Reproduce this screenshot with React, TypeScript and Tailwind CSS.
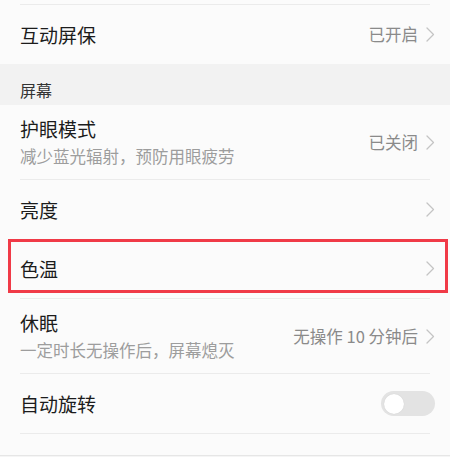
import type { ReactNode } from 'react'

const font = { fontFamily: '"Noto Sans CJK SC", "Noto Sans", sans-serif' }

function Chevron() {
  return (
    <svg width="9" height="15" viewBox="0 0 9 15" fill="none" className="ml-2 shrink-0">
      <path d="M1 1l6.5 6.5L1 14" stroke="#c4c4c4" strokeWidth="1.3" strokeLinecap="round" strokeLinejoin="round" />
    </svg>
  )
}

function Divider() {
  return <div className="mx-5 h-px bg-[#ebebeb]" />
}

interface RowProps {
  title: string
  subtitle?: string
  value?: string
  right?: ReactNode
  highlight?: boolean
}

function Row({ title, subtitle, value, right, highlight }: RowProps) {
  return (
    <div
      className={`relative flex items-center justify-between pl-5 pr-[15px] ${
        subtitle ? 'h-[74px]' : 'h-[59px]'
      }`}
    >
      <div className="flex flex-col">
        <span className="text-[19px] leading-[26px] text-[#1c1c1c]">{title}</span>
        {subtitle && (
          <span className="text-[16.5px] leading-[24px] text-[#9d9d9d] mt-[2px]">{subtitle}</span>
        )}
      </div>
      {right ?? (
        <div className="flex items-center">
          {value && <span className="text-[16.5px] text-[#8a8a8a]">{value}</span>}
          <Chevron />
        </div>
      )}
      {highlight && (
        <div className="pointer-events-none absolute left-[8px] right-[2px] top-0 bottom-[5px] border-[3px] border-[#f03a47]" />
      )}
    </div>
  )
}

function Toggle() {
  return (
    <div className="flex h-[25px] w-[54px] items-center rounded-full bg-[#e3e3e3] px-[3px]">
      <div className="h-[20px] w-[20px] rounded-full bg-white shadow-[0_0_1px_rgba(0,0,0,0.15)]" />
    </div>
  )
}

export default function App() {
  return (
    <div className="h-[457px] w-[450px] overflow-hidden bg-[#fbfbfb]" style={font}>
      <div className="h-[4px]" />
      <Divider />
      <Row title="互动屏保" value="已开启" />
      <div className="flex h-[41px] items-end bg-[#f2f2f2] px-5 pb-[3px]">
        <span className="text-[16px] leading-[24px] text-[#333]">屏幕</span>
      </div>
      <Row title="护眼模式" subtitle="减少蓝光辐射，预防用眼疲劳" value="已关闭" />
      <Divider />
      <Row title="亮度" />
      <Row title="色温" highlight />
      <Divider />
      <Row title="休眠" subtitle="一定时长无操作后，屏幕熄灭" value="无操作 10 分钟后" />
      <Divider />
      <Row title="自动旋转" right={<Toggle />} />
      <Divider />
      <div className="h-[21px]" />
      <div className="h-px bg-[#e6e6e6]" />
      <div className="h-[2px] bg-[#f5f5f5]" />
    </div>
  )
}
